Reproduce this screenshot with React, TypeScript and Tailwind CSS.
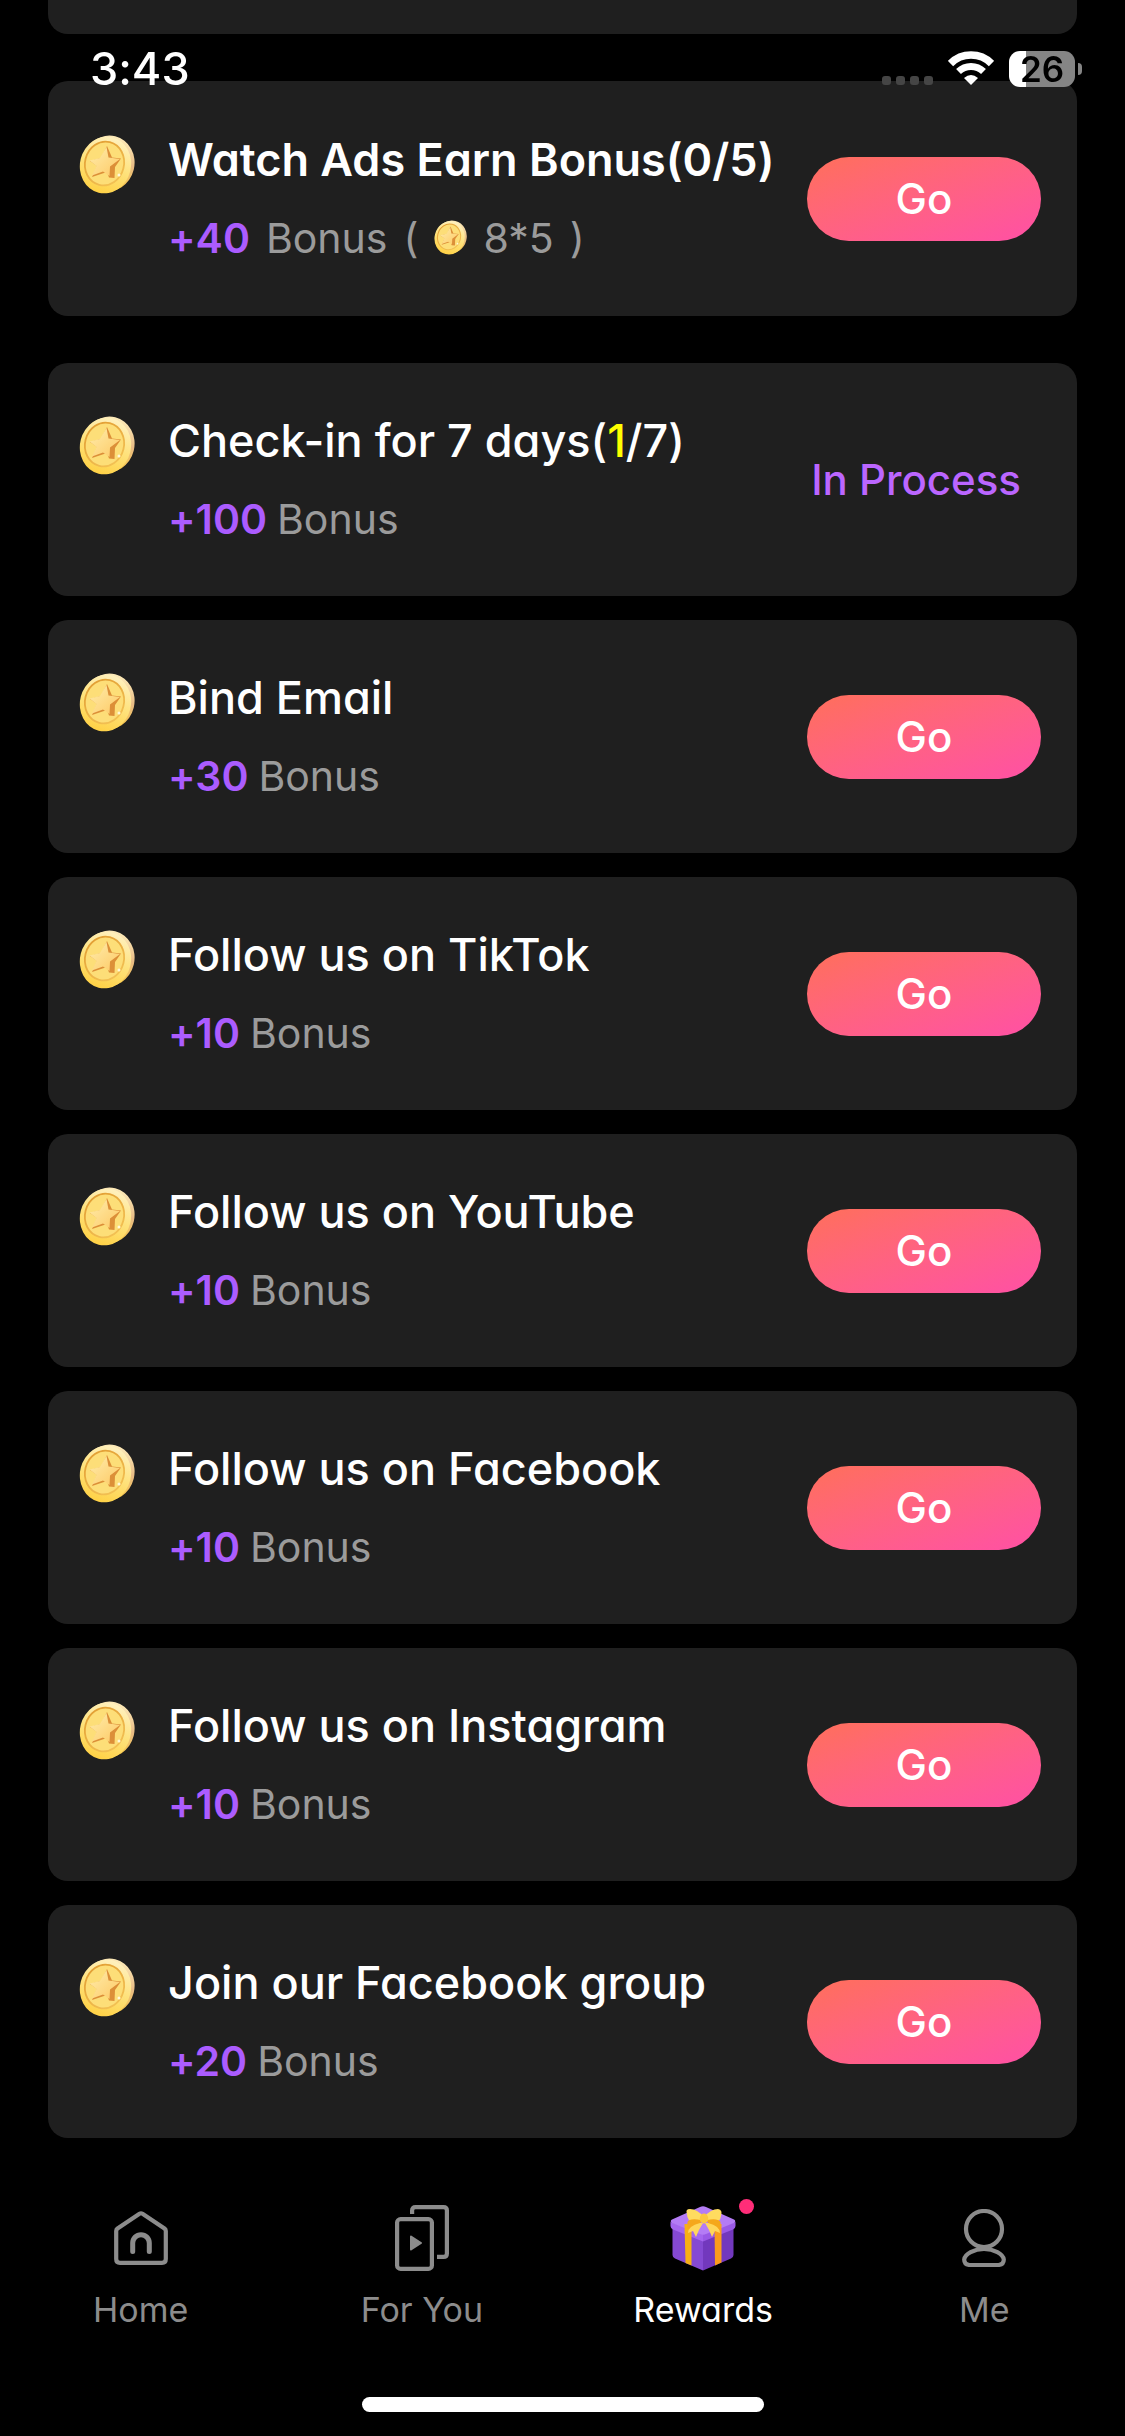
import React from "react";

type Task = {
  title: React.ReactNode;
  bonus: number;
  detail?: string;
  status: "go" | "process";
  bold?: boolean;
};

const watchTask: Task = {
  title: "Watch Ads Earn Bonus(0/5)",
  bonus: 40,
  detail: "8*5",
  status: "go",
  bold: true,
};

const tasks: Task[] = [
  {
    title: (
      <>
        Check-in for 7 days(<span className="text-[#ffff00]">1</span>/7)
      </>
    ),
    bonus: 100,
    status: "process",
  },
  { title: "Bind Email", bonus: 30, status: "go" },
  { title: "Follow us on TikTok", bonus: 10, status: "go" },
  { title: "Follow us on YouTube", bonus: 10, status: "go" },
  { title: "Follow us on Facebook", bonus: 10, status: "go" },
  { title: "Follow us on Instagram", bonus: 10, status: "go" },
  { title: "Join our Facebook group", bonus: 20, status: "go" },
];

// shared gradients, referenced by id from every coin
function CoinDefs() {
  return (
    <svg className="absolute size-0" aria-hidden="true">
      <defs>
        <linearGradient id="coin-rim" x1="0.5" y1="0" x2="0.4" y2="1">
          <stop offset="0" stopColor="#fff0bd" />
          <stop offset="0.5" stopColor="#fee27c" />
          <stop offset="1" stopColor="#ffd145" />
        </linearGradient>
        <linearGradient id="coin-side" x1="0" y1="0" x2="0" y2="1">
          <stop offset="0" stopColor="#fdeab8" />
          <stop offset="0.45" stopColor="#e8bb84" />
          <stop offset="1" stopColor="#ffce3a" />
        </linearGradient>
        <linearGradient id="coin-ring" x1="0" y1="0" x2="1" y2="1">
          <stop offset="0" stopColor="#e09a30" />
          <stop offset="1" stopColor="#f5c658" />
        </linearGradient>
        <linearGradient id="coin-star" x1="0" y1="0" x2="1" y2="1">
          <stop offset="0" stopColor="#ffedac" />
          <stop offset="1" stopColor="#fdc964" />
        </linearGradient>
      </defs>
    </svg>
  );
}

function Coin({ className }: { className: string }) {
  return (
    <svg viewBox="0 0 56 59" className={className} aria-hidden="true">
      <ellipse cx="29.500" cy="28.500" rx="26" ry="28" fill="url(#coin-side)" transform="rotate(14 29.500 28.500)" />
      <ellipse cx="26.500" cy="30" rx="25.500" ry="28.500" fill="url(#coin-rim)" transform="rotate(14 26.500 30)" />
      <ellipse cx="25.500" cy="28.500" rx="19.500" ry="22" fill="#fdde78" stroke="url(#coin-ring)" strokeWidth="1.800" transform="rotate(14 25.500 28.500)" />
      {/* star with its right-hand shadows */}
      <path d="M28 11 L33 22.500 L42 23.500 L36 32 L35.500 43 L30 42.500 L28 37 L13 42 L18 31 L11 26 L22 23 Z" fill="#dc8f38" />
      <path d="M27.500 12 L29.500 22.500 L41 24 L31 31.500 L30.500 41 L24 36.500 L13 40.500 L17.500 31 L10.500 25.500 L21 23 Z" fill="url(#coin-star)" />
      <circle cx="40" cy="40" r="1.500" fill="#fff8d8" />
    </svg>
  );
}

function TaskCard({ task }: { task: Task }) {
  return (
    <li
      className={
        task.bold
          ? "flex min-h-[235px] items-center rounded-[20px] bg-[#1f1f1f] pr-9 pl-[31px]"
          : "flex min-h-[233px] items-center rounded-[20px] bg-[#1f1f1f] pr-9 pl-[31px]"
      }
    >
      <div className="flex flex-1 items-start gap-[33px]">
        <Coin className="h-[59px] w-[56px] shrink-0" />
        <div>
          <h2
            className={
              task.bold
                ? "text-[45px] leading-[50px] font-semibold whitespace-nowrap text-white"
                : "text-[45px] leading-[50px] font-medium whitespace-nowrap text-white"
            }
          >
            {task.title}
          </h2>
          <p
            className={
              task.detail
                ? "mt-7 flex items-center gap-4 text-[41px] leading-[50px] text-[#9b9b9b]"
                : "mt-7 flex items-center gap-[10px] text-[41px] leading-[50px] text-[#9b9b9b]"
            }
          >
            <span className="font-semibold text-[#ab5cff]">+{task.bonus}</span>
            <span>Bonus</span>
            {task.detail && (
              <>
                <span>(</span>
                <Coin className="h-[35px] w-[33px]" />
                <span>{task.detail}</span>
                <span>)</span>
              </>
            )}
          </p>
        </div>
      </div>
      {task.status === "go" ? (
        <button
          type="button"
          className="h-[84px] w-[234px] shrink-0 rounded-full bg-linear-to-br from-[#ff6f59] to-[#ff4fa5] text-[42px] font-medium text-white"
        >
          Go
        </button>
      ) : (
        <span className="shrink-0 pr-5 text-[42px] font-medium text-[#bb66ff]">In Process</span>
      )}
    </li>
  );
}

function StatusBar() {
  return (
    <header className="fixed inset-x-0 top-0 z-10 flex items-start justify-between pt-[42px] pr-[43px] pl-[90px]">
      <time className="text-[45px] leading-[54px] font-medium text-white">3:43</time>
      <div className="flex items-start gap-[15px] pt-[9px]">
        <div className="flex gap-[5px] pt-[25px]">
          <i className="size-[9px] rounded-[3px] bg-[#454545]" />
          <i className="size-[9px] rounded-[3px] bg-[#454545]" />
          <i className="size-[9px] rounded-[3px] bg-[#454545]" />
          <i className="size-[9px] rounded-[3px] bg-[#454545]" />
        </div>
        <svg viewBox="0 0 46 34" className="h-[34px] w-[46px]" fill="none" stroke="#fff" aria-hidden="true">
          <path d="M2.500 12.500 A29 29 0 0 1 43.500 12.500" strokeWidth="7.500" />
          <path d="M10.500 20.500 A18 18 0 0 1 35.500 20.500" strokeWidth="7" />
          <path d="M23 34 L16 27 Q23 21 30 27 Z" fill="#fff" stroke="none" />
        </svg>
        <div className="flex items-center gap-[3px]">
          <div className="flex h-9 w-[66px] items-center justify-center rounded-[11px] bg-linear-to-r from-white from-26% to-[#858585] to-26% text-[35px] leading-9 font-semibold text-black">
            26
          </div>
          <i className="h-3 w-1 rounded-r-full bg-[#858585]" />
        </div>
      </div>
    </header>
  );
}

function HomeIcon() {
  return (
    <svg viewBox="0 0 54 54" className="h-[54px] w-[54px]" fill="none" stroke="currentColor" strokeLinecap="round" strokeLinejoin="round" aria-hidden="true">
      <path d="M2.200 20 Q2.200 18.500 3.500 17.500 L25.500 2.700 Q27 1.800 28.500 2.700 L50.500 17.500 Q51.800 18.500 51.800 20 V48 Q51.800 51.800 48 51.800 H6 Q2.200 51.800 2.200 48 Z" strokeWidth="4.200" />
      <path d="M18.700 40.500 V32 A8.300 8.300 0 0 1 35.300 32 V40.500" strokeWidth="5" />
    </svg>
  );
}

function ForYouIcon() {
  return (
    <svg viewBox="0 0 54 66" className="h-[66px] w-[54px]" fill="none" stroke="currentColor" strokeWidth="4.200" aria-hidden="true">
      <rect x="2.100" y="14.100" width="34.800" height="49.800" rx="3.500" />
      <path d="M17.100 9 V5.500 Q17.100 2.100 20.500 2.100 H48.500 Q51.900 2.100 51.900 5.500 V48.500 Q51.900 51.900 48.500 51.900 H42" />
      <path d="M16 31.500 L26 38 L16 44.500 Z" fill="currentColor" strokeWidth="2" strokeLinejoin="round" />
    </svg>
  );
}

function GiftIcon() {
  return (
    <svg viewBox="0 0 66 65" className="h-[65px] w-[66px]" aria-hidden="true">
      <path d="M2.500 20 L33 32 V64.500 L5 52.500 Q2.500 51 2.500 49 Z" fill="#8549d3" />
      <path d="M63.500 20 L33 32 V64.500 L61 52.500 Q63.500 51 63.500 49 Z" fill="#7238bd" />
      <path d="M0.500 16 L33 27 V35.500 L3 23.500 Q0.500 22 0.500 20 Z" fill="#a566ee" />
      <path d="M65.500 16 L33 27 V35.500 L63 23.500 Q65.500 22 65.500 20 Z" fill="#9a59e6" />
      <path d="M30 1 Q33 -0.500 36 1 L64 13.500 Q66.500 15 64 17 L36 28 Q33 29.500 30 28 L2 17 Q-0.500 15 2 13.500 Z" fill="#b47cf5" />
      <path d="M14.500 18 H21.500 V59.500 L15.500 57 Z" fill="#f7b015" />
      <path d="M44.500 18 H51.500 V56.500 L45 59.500 Z" fill="#fb9c1c" />
      <path d="M32 14 Q17 19 17 8 Q15 3 20 3 Q27 3 34 11 Q41 3 48 3 Q53 4 51 10 Q50 19 37 14 Z" fill="#ffdc5f" />
      <path d="M31 14 Q19 12 17.500 16 Q17 21 18 23 L28 19 Q32 17 31 14 Z" fill="#f5a71b" />
      <path d="M37 14 Q48 12 50.500 16 Q51 21 50 23 L41 19 Q37 17 37 14 Z" fill="#f5a71b" />
      <path d="M30 17 Q18 20 18 27 L23 25 L26 31 Q29 23 33 17 Z" fill="#ffd65a" />
      <path d="M38 17 Q50 20 50 27 L45 25 L42 31 Q39 23 35 17 Z" fill="#ffd65a" />
      <ellipse cx="34" cy="12.500" rx="4.200" ry="5" fill="#fbc83e" />
    </svg>
  );
}

function MeIcon() {
  return (
    <svg viewBox="0 0 44 58" className="h-[58px] w-[44px]" fill="none" stroke="currentColor" strokeWidth="4.200" aria-hidden="true">
      <circle cx="22" cy="20" r="18" />
      <path d="M7.500 56 Q2.200 55.500 2.200 50.500 C3 45 12 40 22 40 C32 40 41 45 41.800 50.500 Q41.800 55.500 36.500 56 Z" strokeLinejoin="round" />
    </svg>
  );
}

const tabs = [
  { label: "Home", icon: <HomeIcon /> },
  { label: "For You", icon: <ForYouIcon /> },
  { label: "Rewards", icon: <GiftIcon />, active: true },
  { label: "Me", icon: <MeIcon /> },
];

function TabBar() {
  return (
    <nav className="grid grid-cols-4 pt-[60px]">
      {tabs.map((tab) => (
        <a
          key={tab.label}
          href="#"
          className={
            tab.active
              ? "flex flex-col items-center gap-3 text-[34px] leading-10 text-white"
              : "flex flex-col items-center gap-3 text-[34px] leading-10 text-[#8c8c8c]"
          }
        >
          <span className="relative flex h-20 items-center">
            {tab.icon}
            {tab.active && (
              <i className="absolute top-px -right-[18px] size-[15px] rounded-full bg-[#ff2d78]" />
            )}
          </span>
          {tab.label}
        </a>
      ))}
    </nav>
  );
}

export default function App() {
  return (
    <div className="min-h-screen bg-black font-['Inter',sans-serif] [font-feature-settings:'cv11','calt'_0]">
      <CoinDefs />
      <StatusBar />
      <main className="px-12">
        <div className="h-[34px] rounded-b-[20px] bg-[#1f1f1f]" />
        <ul className="mt-[47px]">
          <TaskCard task={watchTask} />
        </ul>
        <ul className="mt-[47px] flex flex-col gap-6">
          {tasks.map((task, i) => (
            <TaskCard key={i} task={task} />
          ))}
        </ul>
      </main>
      <TabBar />
      <div className="mx-auto mt-[67px] h-[15px] w-[402px] rounded-full bg-white" />
    </div>
  );
}
